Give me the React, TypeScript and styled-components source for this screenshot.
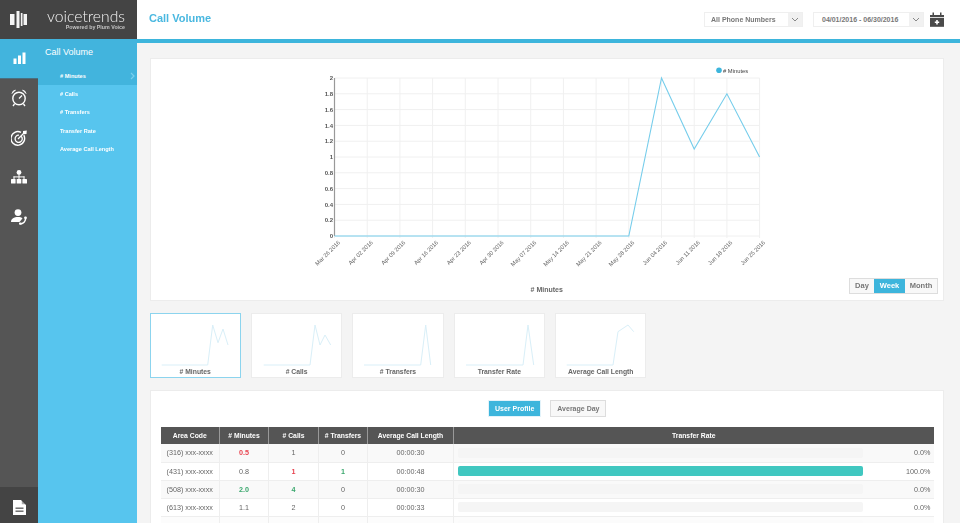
import React from "react";
import styled, { createGlobalStyle } from "styled-components";

const Global = createGlobalStyle`
  html, body { margin: 0; padding: 0; height: 100%; overflow: hidden; background: #f4f4f4; }
  * { box-sizing: border-box; }
  body { font-family: "Liberation Sans", Arial, sans-serif; color: #555; }
`;

const Page = styled.div`
  display: grid;
  grid-template-columns: 137px 1fr;
  height: 523px;
  overflow: hidden;
  filter: blur(0.3px);
`;
const Side = styled.aside`
  display: grid;
  grid-template-rows: 39px 1fr;
  min-height: 0;
`;
const Brand = styled.div`
  display: flex;
  align-items: center;
  background: #444;
  padding: 0 12px 0 10px;
  justify-content: space-between;
`;
const BrandText = styled.div`
  display: flex;
  flex-direction: column;
  align-items: flex-end;
  color: #f2f2f2;
`;
const BrandName = styled.span`
  font-family: Lato, "Open Sans", sans-serif;
  font-weight: 300;
  font-size: 15.7px;
  line-height: 16px;
`;
const BrandSub = styled.span`
  font-size: 5.3px;
  line-height: 7px;
  font-weight: 700;
  color: #c4c4c4;
`;
const SideBody = styled.div`
  display: grid;
  grid-template-columns: 38px 1fr;
  min-height: 0;
`;
const Rail = styled.nav`
  display: flex;
  flex-direction: column;
  background: #555;
`;
const RailItem = styled.div<{ $active?: boolean }>`
  height: 39.5px;
  display: flex;
  align-items: center;
  justify-content: center;
  background: ${(p) => (p.$active ? "#42b4dd" : "transparent")};
  border-bottom: ${(p) => (p.$active ? "1px solid #4a6f80" : "0")};
`;
const RailBottom = styled.div`
  margin-top: auto;
  height: 36px;
  padding-top: 4px;
  display: flex;
  align-items: center;
  justify-content: center;
  background: #444;
`;
const SubNav = styled.nav`
  background: #57c5ee;
  color: #fff;
`;
const SubHead = styled.div`
  height: 27.5px;
  background: #42b4dd;
  padding: 8px 0 0 7px;
  font-size: 9px;
  line-height: 11px;
`;
const SubItem = styled.div<{ $active?: boolean }>`
  height: 18.3px;
  display: flex;
  align-items: center;
  justify-content: space-between;
  padding: 0 2px 0 22px;
  font-size: 5.6px;
  font-weight: 700;
  background: ${(p) => (p.$active ? "#42b4dd" : "transparent")};
`;
const Main = styled.main`
  display: flex;
  flex-direction: column;
  min-width: 0;
  min-height: 0;
`;
const TopBar = styled.header`
  height: 43px;
  flex: none;
  display: flex;
  align-items: flex-start;
  background: #fff;
  border-bottom: 4px solid #3db5dc;
  padding: 12px 16px 0 12px;
`;
const Title = styled.h1`
  margin: 0;
  font-size: 11px;
  line-height: 13px;
  font-weight: 700;
  color: #4ab8e0;
  margin-right: auto;
`;
const Select = styled.div<{ $w: number }>`
  width: ${(p) => p.$w}px;
  height: 15px;
  margin-right: 10px;
  display: flex;
  align-items: stretch;
  border: 1px solid #efefef;
  font-size: 7px;
  font-weight: 700;
  color: #777;
  background: #fff;
`;
const SelectText = styled.span<{ $pad: number }>`
  flex: 1;
  line-height: 13px;
  padding-left: ${(p) => p.$pad}px;
  white-space: nowrap;
`;
const SelectArrow = styled.span`
  width: 14px;
  background: #f1f1f1;
  display: flex;
  align-items: center;
  justify-content: center;
`;
const CalIcon = styled.svg`
  margin-left: -4px;
  flex: none;
`;
const Content = styled.div`
  flex: 1;
  min-height: 0;
  overflow: hidden;
  padding: 15px 16px 0 12.5px;
`;
const ChartPanel = styled.section`
  height: 243px;
  background: #fff;
  border: 1px solid #ececec;
  display: flex;
  flex-direction: column;
`;
const ChartSvg = styled.svg`
  display: block;
  flex: none;
`;
const ChartFooter = styled.div`
  display: grid;
  grid-template-columns: 1fr auto 1fr;
  align-items: center;
  padding: 0 5px;
`;
const AxisTitle = styled.div`
  font-size: 7px;
  font-weight: 700;
  color: #666;
  grid-column: 2;
  margin-top: 3px;
`;
const Toggle = styled.div`
  grid-column: 3;
  justify-self: end;
  display: flex;
  height: 16px;
  border: 1px solid #ddd;
  margin-top: -3px;
`;
const ToggleBtn = styled.div<{ $w: number; $active?: boolean }>`
  width: ${(p) => p.$w}px;
  text-align: center;
  font-size: 7.5px;
  line-height: 14px;
  font-weight: 700;
  color: ${(p) => (p.$active ? "#fff" : "#777")};
  background: ${(p) => (p.$active ? "#3db5dc" : "#f8f8f8")};
`;
const Thumbs = styled.div`
  display: flex;
  gap: 10px;
  margin-top: 12px;
`;
const Thumb = styled.div<{ $active?: boolean }>`
  width: 91.4px;
  height: 64.5px;
  background: #fff;
  border: 1px solid ${(p) => (p.$active ? "#8cd4ee" : "#ececec")};
  display: flex;
  flex-direction: column;
  align-items: center;
`;
const ThumbLabel = styled.span`
  font-size: 6.8px;
  font-weight: 700;
  color: #666;
  line-height: 9px;
  margin-top: 1px;
`;
const TablePanel = styled.section`
  margin-top: 12.5px;
  background: #fff;
  border: 1px solid #ececec;
  padding: 9px 10px 0;
  height: 200px;
`;
const Tabs = styled.div`
  display: flex;
  justify-content: center;
  gap: 9px;
  margin: 0 0 10px 1px;
`;
const Tab = styled.div<{ $active?: boolean }>`
  height: 17px;
  padding: 0 6px;
  font-size: 7px;
  line-height: 15px;
  font-weight: 700;
  border: 1px solid ${(p) => (p.$active ? "#e3f3fa" : "#ddd")};
  color: ${(p) => (p.$active ? "#fff" : "#777")};
  background: ${(p) => (p.$active ? "#3db5dc" : "#f8f8f8")};
`;
const Table = styled.table`
  width: 773px;
  table-layout: fixed;
  border-collapse: collapse;
  font-size: 7.2px;
`;
const Th = styled.th<{ $w?: number }>`
  width: ${(p) => (p.$w ? `${p.$w}px` : "auto")};
  height: 17px;
  padding: 0;
  background: #555;
  color: #fff;
  font-size: 6.8px;
  font-weight: 700;
  text-align: center;
  border-left: 1px solid #999;
  &:first-child { border-left: 0; }
`;
const Tr = styled.tr`
  &:nth-child(odd) { background: #f9f9f9; }
  &:nth-child(even) { background: #fff; }
  &:nth-child(5) { opacity: 0.35; }
`;
const Td = styled.td<{ $tone?: "red" | "green" }>`
  height: 18px;
  padding: 0;
  text-align: center;
  border: 1px solid #eee;
  border-top: 0;
  color: ${(p) => (p.$tone === "red" ? "#e8434f" : p.$tone === "green" ? "#3aa76d" : "#666")};
  font-weight: ${(p) => (p.$tone ? 700 : 400)};
  white-space: nowrap;
  &:first-child { border-left: 0; }
  &:last-child { border-right: 0; }
`;
const RateCell = styled.div`
  display: flex;
  align-items: center;
  padding: 0 3px 0 4px;
`;
const Track = styled.div`
  width: 405px;
  height: 10px;
  border-radius: 2px;
  background: #f5f5f5;
  overflow: hidden;
`;
const Fill = styled.div`
  height: 100%;
  background: #40c7c0;
`;
const RateText = styled.span`
  margin-left: auto;
`;

const Chevron = ({ c = "#888" }: { c?: string }) => (
  <svg width="8" height="5" viewBox="0 0 8 5">
    <path d="M1 1 L4 4 L7 1" fill="none" stroke={c} strokeWidth="1" />
  </svg>
);

const dates = ["Mar 26 2016","Apr 02 2016","Apr 09 2016","Apr 16 2016","Apr 23 2016","Apr 30 2016","May 07 2016","May 14 2016","May 21 2016","May 28 2016","Jun 04 2016","Jun 11 2016","Jun 18 2016","Jun 25 2016"];
const yLabels = ["2","1.8","1.6","1.4","1.2","1","0.8","0.6","0.4","0.2","0"];

const X0 = 183.5, XS = 32.7, YT = 19, YH = 158, Y0 = YT + YH;
const vals = [0,0,0,0,0,0,0,0,0,0,2,1.1,1.8,1];

const MainChart = () => (
  <ChartSvg width="792" height="222" viewBox="0 0 792 222">
    {yLabels.map((l, i) => {
      const y = YT + (i * YH) / 10;
      return (
        <g key={l}>
          <line x1={X0} x2={X0 + 13 * XS} y1={y} y2={y} stroke="#f0f0f0" />
          <text x={X0 - 1.5} y={y + 2.2} textAnchor="end" fontSize="6" fontWeight="700" fill="#555" fontFamily="Liberation Sans">{l}</text>
        </g>
      );
    })}
    {dates.map((d, i) => {
      const x = X0 + i * XS;
      return (
        <g key={d}>
          <line x1={x} x2={x} y1={YT} y2={Y0 + 2} stroke="#f0f0f0" />
          <text transform={`translate(${x + 6},${Y0 + 7}) rotate(-45)`} textAnchor="end" fontSize="5.8" fill="#666" fontFamily="Liberation Sans">{d}</text>
        </g>
      );
    })}
    <line x1={X0} x2={X0} y1={YT} y2={Y0} stroke="#999" strokeWidth="1.2" />
    <polyline
      fill="none"
      stroke="#76cdeb"
      strokeWidth="1.1"
      points={vals.map((v, i) => `${X0 + i * XS},${Y0 - (v / 2) * YH}`).join(" ")}
    />
    <circle cx="568" cy="11.3" r="2.8" fill="#3db5dc" />
    <text x="572" y="13.5" fontSize="5.8" fill="#444" fontFamily="Liberation Sans">
      # Minutes
    </text>
  </ChartSvg>
);

const Spark = ({ pts }: { pts: string }) => (
  <svg width="89" height="52" viewBox="0 0 89 52" style={{ display: "block", flex: "none" }}>
    <polyline fill="none" stroke="#d9eff8" strokeWidth="1" points={pts} />
  </svg>
);

const rows: { a: string; m: string; mt?: "red" | "green"; c: string; ct?: "red" | "green"; t: string; tt?: "red" | "green"; l: string; r: number }[] = [
  { a: "(316) xxx-xxxx", m: "0.5", mt: "red", c: "1", t: "0", l: "00:00:30", r: 0 },
  { a: "(431) xxx-xxxx", m: "0.8", c: "1", ct: "red", t: "1", tt: "green", l: "00:00:48", r: 100 },
  { a: "(508) xxx-xxxx", m: "2.0", mt: "green", c: "4", ct: "green", t: "0", l: "00:00:30", r: 0 },
  { a: "(613) xxx-xxxx", m: "1.1", c: "2", t: "0", l: "00:00:33", r: 0 },
  { a: "(614) xxx-xxxx", m: "1.0", c: "1", t: "0", l: "00:00:30", r: 0 },
];

export default function App() {
  return (
    <>
      <Global />
      <Page>
        <Side>
          <Brand>
            <svg width="17" height="17" viewBox="0 0 17 17">
              <g fill="#f4f4f4">
                <rect x="0" y="3" width="4.5" height="11" />
                <rect x="6.5" y="0" width="3" height="17" />
                <rect x="10.8" y="2" width="1.7" height="13" />
                <rect x="13.5" y="3" width="3.5" height="11" />
              </g>
            </svg>
            <BrandText>
              <BrandName>voicetrends</BrandName>
              <BrandSub>Powered by Plum Voice</BrandSub>
            </BrandText>
          </Brand>
          <SideBody>
            <Rail>
              <RailItem $active>
                <svg width="13" height="13" viewBox="0 0 13 13">
                  <g fill="#fff">
                    <rect x="0.5" y="6.5" width="3" height="5.5" />
                    <rect x="5" y="3.5" width="3" height="8.5" />
                    <rect x="9.5" y="0.5" width="3" height="11.5" />
                  </g>
                </svg>
              </RailItem>
              <RailItem>
                <svg width="16" height="18" viewBox="0 0 16 18" fill="none" stroke="#fff">
                  <circle cx="8" cy="9.5" r="6.2" strokeWidth="1.4" />
                  <path d="M8 9.5 L11 6.5" strokeWidth="1.3" />
                  <path d="M1 4.5 Q1.5 1.5 4.5 1 Z M15 4.5 Q14.5 1.5 11.5 1 Z" fill="#fff" strokeWidth="0.7" />
                  <path d="M3.5 15 L2 17 M12.5 15 L14 17" strokeWidth="1.3" />
                </svg>
              </RailItem>
              <RailItem>
                <svg width="17" height="16" viewBox="0 0 17 16" fill="none" stroke="#fff">
                  <path d="M12.8 5.2 A6.8 6.8 0 1 1 10 2.4" strokeWidth="1.4" />
                  <path d="M10.2 6.2 A3.6 3.6 0 1 1 8 5.2" strokeWidth="1.3" />
                  <path d="M7 9 L13 3" strokeWidth="1.2" />
                  <path d="M12 1 L15.8 0.6 L15.5 4 L13 4.2 L12 3.2 Z" fill="#fff" stroke="none" />
                </svg>
              </RailItem>
              <RailItem>
                <svg width="16" height="14" viewBox="0 0 16 14">
                  <g fill="#fff">
                    <circle cx="8" cy="2.4" r="2.4" />
                    <rect x="7.5" y="4" width="1" height="6" />
                    <rect x="2.5" y="6.4" width="11" height="1" />
                    <rect x="2.5" y="6.4" width="1" height="3" />
                    <rect x="12.5" y="6.4" width="1" height="3" />
                    <rect x="0" y="9" width="4.6" height="4.6" rx="0.6" />
                    <rect x="5.7" y="9" width="4.6" height="4.6" rx="0.6" />
                    <rect x="11.4" y="9" width="4.6" height="4.6" rx="0.6" />
                  </g>
                </svg>
              </RailItem>
              <RailItem>
                <svg width="16" height="16" viewBox="0 0 16 16">
                  <circle cx="7" cy="3.6" r="3.4" fill="#fff" />
                  <path d="M0 13 C0 9.5 3 8 7 8 C9 8 10.5 8.4 11.5 9.2 C10.5 10.5 9.5 11.8 8.5 13 Z" fill="#fff" />
                  <path d="M14.6 8.5 C14.8 12 12.5 14.6 9.5 15" fill="none" stroke="#fff" strokeWidth="1.6" />
                  <rect x="8" y="13.4" width="2.6" height="2.4" rx="0.8" fill="#fff" />
                  <rect x="13.3" y="7.4" width="2.4" height="2.6" rx="0.8" fill="#fff" />
                </svg>
              </RailItem>
              <RailBottom>
                <svg width="13" height="15" viewBox="0 0 13 15">
                  <path d="M0 0 H8 L13 5 V15 H0 Z" fill="#fff" />
                  <path d="M8.8 0 L13 4.2 H8.8 Z" fill="#444" opacity="0.45" />
                  <rect x="2.5" y="7.5" width="8" height="1.4" fill="#666" />
                  <rect x="2.5" y="10.5" width="8" height="1.4" fill="#666" />
                </svg>
              </RailBottom>
            </Rail>
            <SubNav>
              <SubHead>Call Volume</SubHead>
              <SubItem $active>
                # Minutes
                <svg width="5" height="8" viewBox="0 0 5 8">
                  <path d="M1 1 L4 4 L1 7" fill="none" stroke="#78cfee" strokeWidth="1.2" />
                </svg>
              </SubItem>
              <SubItem># Calls</SubItem>
              <SubItem># Transfers</SubItem>
              <SubItem>Transfer Rate</SubItem>
              <SubItem>Average Call Length</SubItem>
            </SubNav>
          </SideBody>
        </Side>
        <Main>
          <TopBar>
            <Title>Call Volume</Title>
            <Select $w={99}>
              <SelectText $pad={6}>All Phone Numbers</SelectText>
              <SelectArrow><Chevron /></SelectArrow>
            </Select>
            <Select $w={111}>
              <SelectText $pad={8}>04/01/2016 - 06/30/2016</SelectText>
              <SelectArrow><Chevron /></SelectArrow>
            </Select>
            <CalIcon width="14" height="15" viewBox="0 0 14 15">
              <path d="M0 3 H2.5 V0.5 H4 V3 H10 V0.5 H11.5 V3 H14 V5 H0 Z" fill="#4a4a4a" />
              <rect x="0" y="5.8" width="14" height="9" fill="#4a4a4a" />
              <path d="M7 8 V12.5 M4.8 10.2 H9.2" stroke="#fff" strokeWidth="1.6" />
            </CalIcon>
          </TopBar>
          <Content>
            <ChartPanel>
              <MainChart />
              <ChartFooter>
                <AxisTitle># Minutes</AxisTitle>
                <Toggle>
                  <ToggleBtn $w={24}>Day</ToggleBtn>
                  <ToggleBtn $w={31} $active>Week</ToggleBtn>
                  <ToggleBtn $w={32}>Month</ToggleBtn>
                </Toggle>
              </ChartFooter>
            </ChartPanel>
            <Thumbs>
              <Thumb $active>
                <Spark pts="10.7,51 56.7,51 61.7,11 67,28.7 72,15 77,31" />
                <ThumbLabel># Minutes</ThumbLabel>
              </Thumb>
              <Thumb>
                <Spark pts="11.7,51 58,51 63,11 68,31 73,21 78.7,31" />
                <ThumbLabel># Calls</ThumbLabel>
              </Thumb>
              <Thumb>
                <Spark pts="11,51 67.7,51 72.7,11 77.7,51" />
                <ThumbLabel># Transfers</ThumbLabel>
              </Thumb>
              <Thumb>
                <Spark pts="11,51 68,51 73,11 78.7,51" />
                <ThumbLabel>Transfer Rate</ThumbLabel>
              </Thumb>
              <Thumb>
                <Spark pts="10.7,51 57,51 62,17.7 72,11 77.7,17.7" />
                <ThumbLabel>Average Call Length</ThumbLabel>
              </Thumb>
            </Thumbs>
            <TablePanel>
              <Tabs>
                <Tab $active>User Profile</Tab>
                <Tab>Average Day</Tab>
              </Tabs>
              <Table>
                <thead>
                  <tr>
                    <Th $w={59}>Area Code</Th>
                    <Th $w={49}># Minutes</Th>
                    <Th $w={50}># Calls</Th>
                    <Th $w={49}># Transfers</Th>
                    <Th $w={86}>Average Call Length</Th>
                    <Th>Transfer Rate</Th>
                  </tr>
                </thead>
                <tbody>
                  {rows.map((r) => (
                    <Tr key={r.a}>
                      <Td>{r.a}</Td>
                      <Td $tone={r.mt}>{r.m}</Td>
                      <Td $tone={r.ct}>{r.c}</Td>
                      <Td $tone={r.tt}>{r.t}</Td>
                      <Td>{r.l}</Td>
                      <Td>
                        <RateCell>
                          <Track><Fill style={{ width: `${r.r}%` }} /></Track>
                          <RateText>{r.r.toFixed(1)}%</RateText>
                        </RateCell>
                      </Td>
                    </Tr>
                  ))}
                </tbody>
              </Table>
            </TablePanel>
          </Content>
        </Main>
      </Page>
    </>
  );
}
